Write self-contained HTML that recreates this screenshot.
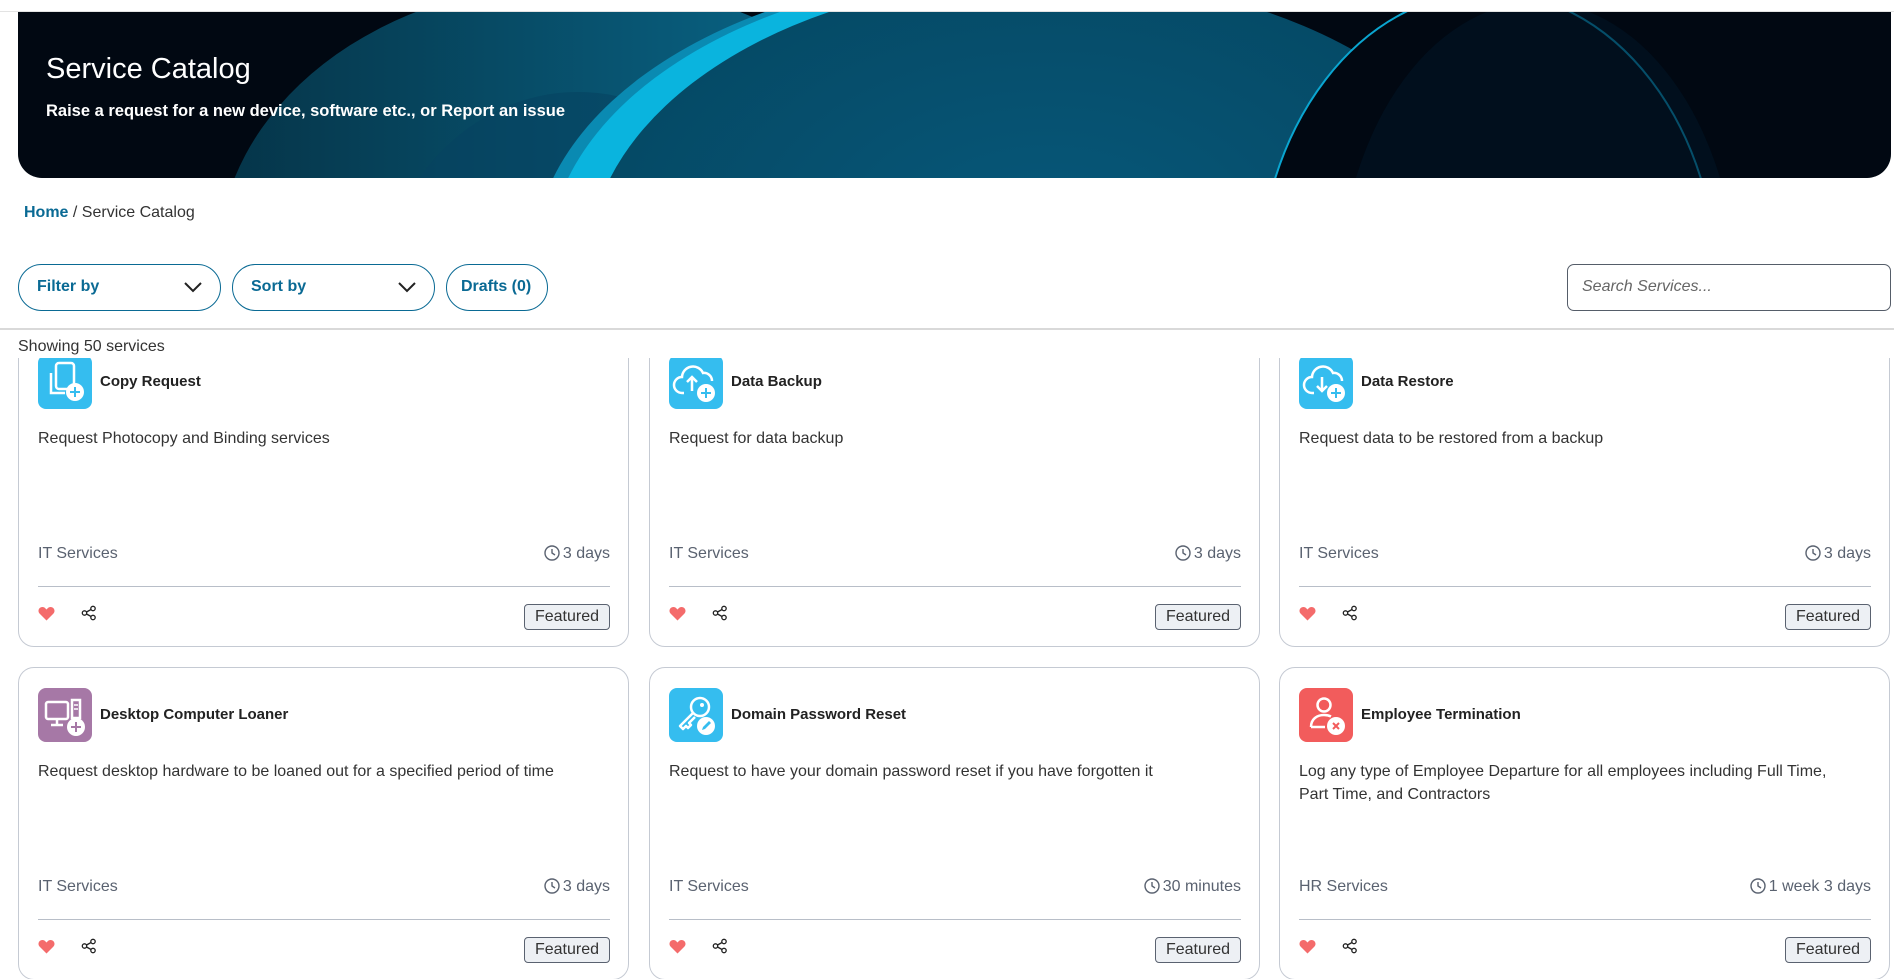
<!DOCTYPE html>
<html><head><meta charset="utf-8"><style>
*{box-sizing:border-box;margin:0;padding:0}
body{width:1894px;height:979px;overflow:hidden;background:#fff;font-family:"Liberation Sans",Arial,sans-serif;position:relative}
.abs{position:absolute}
.topline{left:0;top:11px;width:1894px;height:1px;background:#e3e3e3}
.banner{left:18px;top:12px;width:1873px;height:166px;border-radius:0 0 24px 24px;overflow:hidden;background:#010812}
.btitle{color:#fff;font-size:29px}
.bsub{color:#fff;font-size:16.5px;font-weight:bold}
.crumb{left:24px;top:204px;font-size:16px;color:#333}
.crumb b{color:#0a6a94}
.btn{top:264px;height:47px;border:1.5px solid #0a6a94;border-radius:24px;color:#0a6a94;font-weight:bold;font-size:16px;line-height:44px;padding-left:18px}
.btn svg{position:absolute;right:18px;top:16px}
.search{left:1567px;top:264px;width:324px;height:47px;border:1.5px solid #555d69;border-radius:7px;font-style:italic;color:#666;font-size:16px;line-height:44px;padding-left:14px}
.hline{left:0;top:328px;width:1894px;height:1.5px;background:#d9d9d9}
.showing{left:18px;top:338px;font-size:16px;color:#333}
.clip{left:0;top:358px;width:1894px;height:621px;overflow:hidden}
.card{width:611px;height:313px;border:1.3px solid #c5cad3;border-radius:16px;background:#fff}
.ic{left:19px;top:20px;width:54px;height:54px;border-radius:8px}
.ct{left:81px;top:38px;font-size:15px;font-weight:bold;color:#222}
.cd{left:19px;top:92px;width:560px;font-size:16px;color:#333;line-height:23px}
.cm{left:19px;top:210px;font-size:16px;color:#5a6270}
.ctime{right:18px;top:210px;font-size:16px;color:#5a6270}
.ctime svg{vertical-align:-3px;margin-right:3px}
.sep{left:19px;right:18px;top:251px;height:1.3px;background:#b8bec8}
.heart{left:19px;top:271px}
.share{left:62px;top:270px}
.feat{right:18px;top:269px;height:26px;padding:0 10px;border:1.3px solid #5a6270;border-radius:4px;background:#edf0f4;color:#333;font-size:16px;line-height:23px}
</style></head><body>
<div class="abs topline"></div>
<div class="abs banner">
<svg width="1873" height="166" viewBox="0 0 1873 166" style="position:absolute;left:0;top:0">
<defs>
<radialGradient id="g1" cx="0.5" cy="0.45" r="0.6"><stop offset="0" stop-color="#07587a"/><stop offset="0.8" stop-color="#054a66"/><stop offset="1" stop-color="#022a3c"/></radialGradient>
<linearGradient id="g3" x1="0" x2="1"><stop offset="0" stop-color="#053448"/><stop offset="1" stop-color="#0a6e92"/></linearGradient>
</defs>
<ellipse cx="560" cy="250" rx="360" ry="280" fill="url(#g3)"/>
<ellipse cx="560" cy="300" rx="200" ry="220" fill="#064260" opacity="0.6"/>
<ellipse cx="985" cy="250" rx="470" ry="290" fill="#0a8ab2"/>
<ellipse cx="1000" cy="250" rx="470" ry="290" fill="#0ab4de"/>
<ellipse cx="1030" cy="255" rx="460" ry="290" fill="url(#g1)"/>
<ellipse cx="1470" cy="280" rx="230" ry="300" fill="#010812" stroke="#0aa5d0" stroke-width="2"/>
<ellipse cx="1520" cy="290" rx="200" ry="300" fill="#021424" opacity="0.6"/>
</svg>
<div class="abs btitle" style="left:28px;top:41px">Service Catalog</div>
<div class="abs bsub" style="left:28px;top:90px">Raise a request for a new device, software etc., or Report an issue</div>
</div>
<div class="abs crumb"><b>Home</b> / Service Catalog</div>
<div class="abs btn" style="left:18px;width:203px">Filter by<svg width="18" height="12" viewBox="0 0 18 12"><path d="M1 2l8 8 8-8" fill="none" stroke="#222" stroke-width="2"/></svg></div>
<div class="abs btn" style="left:232px;width:203px">Sort by<svg width="18" height="12" viewBox="0 0 18 12"><path d="M1 2l8 8 8-8" fill="none" stroke="#222" stroke-width="2"/></svg></div>
<div class="abs btn" style="left:446px;width:102px;padding-left:14px">Drafts (0)</div>
<div class="abs search">Search Services...</div>
<div class="abs hline"></div>
<div class="abs showing">Showing 50 services</div>

<div class="abs clip">
<div class="abs card" style="left:18px;top:-24px">
 <div class="abs ic" style="background:#35bdef"><svg width="54" height="54" viewBox="0 0 54 54"><rect x="18" y="8" width="18" height="26" rx="3" fill="none" stroke="#fff" stroke-width="2.5"/><path d="M13 18v20h14" fill="none" stroke="#fff" stroke-width="2.5"/><circle cx="37" cy="37" r="9" fill="#fff"/><path d="M37 32v10M32 37h10" stroke="#35bdef" stroke-width="2"/></svg></div>
 <div class="abs ct">Copy Request</div>
 <div class="abs cd">Request Photocopy and Binding services</div>
 <div class="abs cm">IT Services</div>
 <div class="abs ctime"><svg width="16" height="16" viewBox="0 0 16 16"><circle cx="8" cy="8" r="7" fill="none" stroke="#5a6270" stroke-width="1.4"/><path d="M8 4v4l3 2" fill="none" stroke="#5a6270" stroke-width="1.4"/></svg>3 days</div>
 <div class="abs sep"></div>
 <svg class="abs heart" width="17" height="15" viewBox="0 0 17 15"><path d="M8.5 14.5L1.5 7.5C-0.5 5.5 0.5 1 4.5 1c2 0 3 1.5 4 2.5C9.5 2.5 10.5 1 12.5 1c4 0 5 4.5 3 6.5z" fill="#f46b6b"/></svg>
 <svg class="abs share" width="16" height="16" viewBox="0 0 16 16"><circle cx="12" cy="3.5" r="2.2" fill="none" stroke="#222" stroke-width="1.3"/><circle cx="3.5" cy="8" r="2.2" fill="none" stroke="#222" stroke-width="1.3"/><circle cx="12" cy="12.5" r="2.2" fill="none" stroke="#222" stroke-width="1.3"/><path d="M5.5 7l4.6-2.5M5.5 9l4.6 2.5" stroke="#222" stroke-width="1.3"/></svg>
 <div class="abs feat">Featured</div>
</div>
<div class="abs card" style="left:649px;top:-24px">
 <div class="abs ic" style="background:#35bdef"><svg width="54" height="54" viewBox="0 0 54 54"><path d="M15 38h-2a8 8 0 0 1 0-16 11 11 0 0 1 21-4 8 8 0 0 1 9 8" fill="none" stroke="#fff" stroke-width="2.5"/><path d="M23 36V22M18 27l5-5 5 5" fill="none" stroke="#fff" stroke-width="2.5"/><circle cx="37" cy="38" r="9" fill="#fff"/><path d="M37 33v10M32 38h10" stroke="#35bdef" stroke-width="2"/></svg></div>
 <div class="abs ct">Data Backup</div>
 <div class="abs cd">Request for data backup</div>
 <div class="abs cm">IT Services</div>
 <div class="abs ctime"><svg width="16" height="16" viewBox="0 0 16 16"><circle cx="8" cy="8" r="7" fill="none" stroke="#5a6270" stroke-width="1.4"/><path d="M8 4v4l3 2" fill="none" stroke="#5a6270" stroke-width="1.4"/></svg>3 days</div>
 <div class="abs sep"></div>
 <svg class="abs heart" width="17" height="15" viewBox="0 0 17 15"><path d="M8.5 14.5L1.5 7.5C-0.5 5.5 0.5 1 4.5 1c2 0 3 1.5 4 2.5C9.5 2.5 10.5 1 12.5 1c4 0 5 4.5 3 6.5z" fill="#f46b6b"/></svg>
 <svg class="abs share" width="16" height="16" viewBox="0 0 16 16"><circle cx="12" cy="3.5" r="2.2" fill="none" stroke="#222" stroke-width="1.3"/><circle cx="3.5" cy="8" r="2.2" fill="none" stroke="#222" stroke-width="1.3"/><circle cx="12" cy="12.5" r="2.2" fill="none" stroke="#222" stroke-width="1.3"/><path d="M5.5 7l4.6-2.5M5.5 9l4.6 2.5" stroke="#222" stroke-width="1.3"/></svg>
 <div class="abs feat">Featured</div>
</div>
<div class="abs card" style="left:1279px;top:-24px">
 <div class="abs ic" style="background:#35bdef"><svg width="54" height="54" viewBox="0 0 54 54"><path d="M15 38h-2a8 8 0 0 1 0-16 11 11 0 0 1 21-4 8 8 0 0 1 9 8" fill="none" stroke="#fff" stroke-width="2.5"/><path d="M23 22v14M18 31l5 5 5-5" fill="none" stroke="#fff" stroke-width="2.5"/><circle cx="37" cy="38" r="9" fill="#fff"/><path d="M37 33v10M32 38h10" stroke="#35bdef" stroke-width="2"/></svg></div>
 <div class="abs ct">Data Restore</div>
 <div class="abs cd">Request data to be restored from a backup</div>
 <div class="abs cm">IT Services</div>
 <div class="abs ctime"><svg width="16" height="16" viewBox="0 0 16 16"><circle cx="8" cy="8" r="7" fill="none" stroke="#5a6270" stroke-width="1.4"/><path d="M8 4v4l3 2" fill="none" stroke="#5a6270" stroke-width="1.4"/></svg>3 days</div>
 <div class="abs sep"></div>
 <svg class="abs heart" width="17" height="15" viewBox="0 0 17 15"><path d="M8.5 14.5L1.5 7.5C-0.5 5.5 0.5 1 4.5 1c2 0 3 1.5 4 2.5C9.5 2.5 10.5 1 12.5 1c4 0 5 4.5 3 6.5z" fill="#f46b6b"/></svg>
 <svg class="abs share" width="16" height="16" viewBox="0 0 16 16"><circle cx="12" cy="3.5" r="2.2" fill="none" stroke="#222" stroke-width="1.3"/><circle cx="3.5" cy="8" r="2.2" fill="none" stroke="#222" stroke-width="1.3"/><circle cx="12" cy="12.5" r="2.2" fill="none" stroke="#222" stroke-width="1.3"/><path d="M5.5 7l4.6-2.5M5.5 9l4.6 2.5" stroke="#222" stroke-width="1.3"/></svg>
 <div class="abs feat">Featured</div>
</div>

<div class="abs card" style="left:18px;top:309px">
 <div class="abs ic" style="background:#a678a6"><svg width="54" height="54" viewBox="0 0 54 54"><rect x="8" y="14" width="22" height="17" rx="2" fill="none" stroke="#fff" stroke-width="2.5"/><path d="M19 31v5M13 37h12" stroke="#fff" stroke-width="2.5"/><rect x="34" y="12" width="8" height="18" fill="none" stroke="#fff" stroke-width="2.5"/><path d="M36 17h4M36 21h4" stroke="#fff" stroke-width="1.5"/><circle cx="38" cy="39" r="9" fill="#fff"/><path d="M38 34v10M33 39h10" stroke="#a678a6" stroke-width="2"/></svg></div>
 <div class="abs ct">Desktop Computer Loaner</div>
 <div class="abs cd">Request desktop hardware to be loaned out for a specified period of time</div>
 <div class="abs cm">IT Services</div>
 <div class="abs ctime"><svg width="16" height="16" viewBox="0 0 16 16"><circle cx="8" cy="8" r="7" fill="none" stroke="#5a6270" stroke-width="1.4"/><path d="M8 4v4l3 2" fill="none" stroke="#5a6270" stroke-width="1.4"/></svg>3 days</div>
 <div class="abs sep"></div>
 <svg class="abs heart" width="17" height="15" viewBox="0 0 17 15"><path d="M8.5 14.5L1.5 7.5C-0.5 5.5 0.5 1 4.5 1c2 0 3 1.5 4 2.5C9.5 2.5 10.5 1 12.5 1c4 0 5 4.5 3 6.5z" fill="#f46b6b"/></svg>
 <svg class="abs share" width="16" height="16" viewBox="0 0 16 16"><circle cx="12" cy="3.5" r="2.2" fill="none" stroke="#222" stroke-width="1.3"/><circle cx="3.5" cy="8" r="2.2" fill="none" stroke="#222" stroke-width="1.3"/><circle cx="12" cy="12.5" r="2.2" fill="none" stroke="#222" stroke-width="1.3"/><path d="M5.5 7l4.6-2.5M5.5 9l4.6 2.5" stroke="#222" stroke-width="1.3"/></svg>
 <div class="abs feat">Featured</div>
</div>
<div class="abs card" style="left:649px;top:309px">
 <div class="abs ic" style="background:#35bdef"><svg width="54" height="54" viewBox="0 0 54 54"><circle cx="31" cy="19" r="9" fill="none" stroke="#fff" stroke-width="2.5"/><circle cx="33" cy="17" r="2" fill="#fff"/><path d="M24 25L11 38l3 3 3-3 2 2 3-3-2-2 6-6" fill="none" stroke="#fff" stroke-width="2.5" stroke-linejoin="round"/><circle cx="37" cy="38" r="9" fill="#fff"/><path d="M33 42l1-3 6-6 2 2-6 6z" fill="#35bdef"/></svg></div>
 <div class="abs ct">Domain Password Reset</div>
 <div class="abs cd">Request to have your domain password reset if you have forgotten it</div>
 <div class="abs cm">IT Services</div>
 <div class="abs ctime"><svg width="16" height="16" viewBox="0 0 16 16"><circle cx="8" cy="8" r="7" fill="none" stroke="#5a6270" stroke-width="1.4"/><path d="M8 4v4l3 2" fill="none" stroke="#5a6270" stroke-width="1.4"/></svg>30 minutes</div>
 <div class="abs sep"></div>
 <svg class="abs heart" width="17" height="15" viewBox="0 0 17 15"><path d="M8.5 14.5L1.5 7.5C-0.5 5.5 0.5 1 4.5 1c2 0 3 1.5 4 2.5C9.5 2.5 10.5 1 12.5 1c4 0 5 4.5 3 6.5z" fill="#f46b6b"/></svg>
 <svg class="abs share" width="16" height="16" viewBox="0 0 16 16"><circle cx="12" cy="3.5" r="2.2" fill="none" stroke="#222" stroke-width="1.3"/><circle cx="3.5" cy="8" r="2.2" fill="none" stroke="#222" stroke-width="1.3"/><circle cx="12" cy="12.5" r="2.2" fill="none" stroke="#222" stroke-width="1.3"/><path d="M5.5 7l4.6-2.5M5.5 9l4.6 2.5" stroke="#222" stroke-width="1.3"/></svg>
 <div class="abs feat">Featured</div>
</div>
<div class="abs card" style="left:1279px;top:309px">
 <div class="abs ic" style="background:#f25c5c"><svg width="54" height="54" viewBox="0 0 54 54"><circle cx="25" cy="17" r="6.5" fill="none" stroke="#fff" stroke-width="2.5"/><path d="M12 39c0-8 6-12 13-12 3 0 5 .5 7 1.5" fill="none" stroke="#fff" stroke-width="2.5"/><path d="M12 39h14" stroke="#fff" stroke-width="2.5"/><circle cx="37" cy="38" r="9" fill="#fff"/><path d="M34 35l6 6M40 35l-6 6" stroke="#f25c5c" stroke-width="2"/></svg></div>
 <div class="abs ct">Employee Termination</div>
 <div class="abs cd">Log any type of Employee Departure for all employees including Full Time,<br>Part Time, and Contractors</div>
 <div class="abs cm">HR Services</div>
 <div class="abs ctime"><svg width="16" height="16" viewBox="0 0 16 16"><circle cx="8" cy="8" r="7" fill="none" stroke="#5a6270" stroke-width="1.4"/><path d="M8 4v4l3 2" fill="none" stroke="#5a6270" stroke-width="1.4"/></svg>1 week 3 days</div>
 <div class="abs sep"></div>
 <svg class="abs heart" width="17" height="15" viewBox="0 0 17 15"><path d="M8.5 14.5L1.5 7.5C-0.5 5.5 0.5 1 4.5 1c2 0 3 1.5 4 2.5C9.5 2.5 10.5 1 12.5 1c4 0 5 4.5 3 6.5z" fill="#f46b6b"/></svg>
 <svg class="abs share" width="16" height="16" viewBox="0 0 16 16"><circle cx="12" cy="3.5" r="2.2" fill="none" stroke="#222" stroke-width="1.3"/><circle cx="3.5" cy="8" r="2.2" fill="none" stroke="#222" stroke-width="1.3"/><circle cx="12" cy="12.5" r="2.2" fill="none" stroke="#222" stroke-width="1.3"/><path d="M5.5 7l4.6-2.5M5.5 9l4.6 2.5" stroke="#222" stroke-width="1.3"/></svg>
 <div class="abs feat">Featured</div>
</div>
</div>
</body></html>
